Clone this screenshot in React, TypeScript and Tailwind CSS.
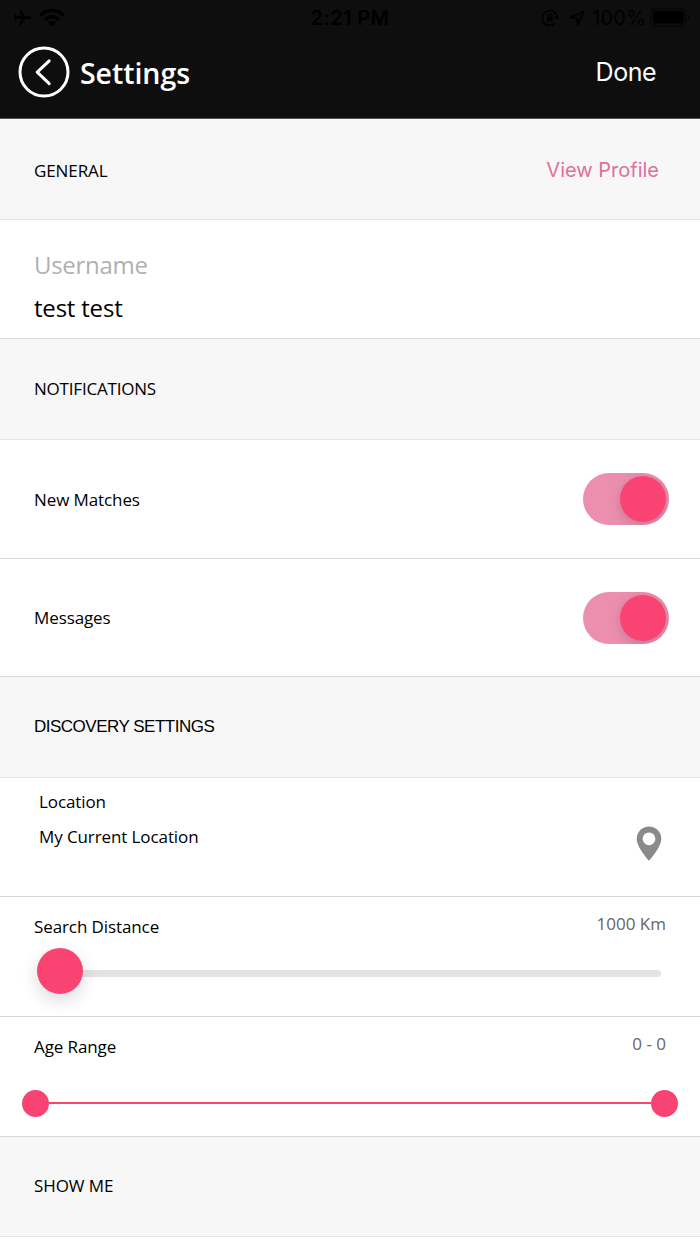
import { useState } from "react";
import { IoMdAirplane } from "react-icons/io";

const openSans = "font-['Open_Sans',sans-serif]";

function StatusBar() {
  return (
    <div className="flex h-[35px] items-center justify-between text-black">
      <div className="flex w-[200px] items-center gap-[6px] pl-[12px]">
        <IoMdAirplane className="size-[21px] rotate-90" />
        <svg viewBox="0 0 26 19" className="h-[19px] w-[26px]" fill="none" stroke="currentColor" strokeWidth="3.6">
          <path d="M1.5 7.2a16.5 16.5 0 0 1 23 0" />
          <path d="M5.8 11.8a10.4 10.4 0 0 1 14.4 0" />
          <path d="M13 18.6l-4-4.2a5.8 5.8 0 0 1 8 0z" fill="currentColor" stroke="none" />
        </svg>
      </div>
      <span className="pt-px font-['Inter',sans-serif] text-[20px] font-semibold leading-[35px] tracking-[0.4px]">2:21 PM</span>
      <div className="flex w-[200px] items-center justify-end pr-[9px]">
        <svg viewBox="0 0 18 18" className="h-[18px] w-[18px]" fill="none" stroke="currentColor" strokeWidth="1.6">
          <path d="M16.2 8A7.4 7.4 0 1 0 14.5 14" />
          <path d="M13.6 7.6h4.4l-2.2 3.4z" fill="currentColor" stroke="none" />
          <path d="M7 8.4V7a1.9 1.9 0 0 1 3.8 0v1.4" strokeWidth="1.2" />
          <rect x="6" y="8" width="5.8" height="4.6" rx="0.6" fill="currentColor" stroke="none" />
        </svg>
        <svg viewBox="0 0 16 16" className="ml-[10px] h-4 w-4" fill="none" stroke="currentColor" strokeWidth="1.8" strokeLinejoin="round">
          <path d="M14.8 1.2L1.2 7.6l6.8.4.6 6.8z" />
        </svg>
        <span className="ml-[7px] pt-px font-['Inter',sans-serif] text-[20px] leading-[35px] tracking-[0.2px]">100%</span>
        <svg viewBox="0 0 41 19" className="ml-[4px] h-[19px] w-[41px] shrink-0">
          <rect x="0.8" y="0.8" width="35" height="17" rx="4.5" fill="none" stroke="#070707" strokeWidth="1.4" />
          <rect x="3" y="3" width="31" height="12.5" rx="2" fill="#000" />
          <path d="M38 6.5c2.4.8 2.4 4.8 0 5.6z" fill="#070707" />
        </svg>
      </div>
    </div>
  );
}

function SectionHeader({ title, className, children }: { title: string; className: string; children?: React.ReactNode }) {
  return (
    <div className={`flex items-center justify-between border-b border-[#e3e3e3] bg-[#f7f7f7] pl-[34px] pr-[41px] text-[17px] leading-6 ${className}`}>
      <h2>{title}</h2>
      {children}
    </div>
  );
}

function Toggle({ checked, onChange }: { checked: boolean; onChange: () => void }) {
  return (
    <button
      type="button"
      role="switch"
      aria-checked={checked}
      onClick={onChange}
      className={`flex h-[52px] w-[86px] items-center overflow-hidden rounded-full bg-[#ec8fae] px-[3px] ${checked ? "justify-end" : "justify-start"}`}
    >
      <span className="size-[46px] rounded-full bg-[#f94473] shadow-[0_3px_12px_rgba(0,0,0,0.17)]" />
    </button>
  );
}

export default function App() {
  const [matches, setMatches] = useState(true);
  const [messages, setMessages] = useState(true);

  return (
    <div className={`flex h-[1244px] w-[700px] flex-col overflow-hidden bg-white text-[17px] tracking-[-0.1px] text-black ${openSans}`}>
      <header className="h-[119px] border-b border-[#555] bg-[#0e0e0e] text-white">
        <StatusBar />
        <div className="flex h-[74px] items-center pl-[18px] pr-[44px]">
          <button type="button" aria-label="Back">
            <svg viewBox="0 0 52 52" className="size-[52px]" fill="none" stroke="currentColor" strokeWidth="3">
              <circle cx="26" cy="26" r="24" />
              <path d="M31.2 14.8L19.2 26.2l12 11.4" strokeLinecap="round" strokeLinejoin="round" />
            </svg>
          </button>
          <h1 className="ml-[10px] mt-px text-[28.5px] font-semibold leading-10 tracking-[-0.05px]">Settings</h1>
          <button type="button" className="ml-auto font-['Inter',sans-serif] text-[25px] leading-8 tracking-[-0.5px]">Done</button>
        </div>
      </header>

      <SectionHeader title="GENERAL" className="h-[101px] pt-[3px]">
        <a className="mb-[2px] font-['Inter',sans-serif] text-[20px] tracking-[0px] text-[#e0709a]">View Profile</a>
      </SectionHeader>
      <div className="h-[119px] border-b border-[#d9d9d9] px-[34px] pt-[25px] text-[24px]">
        <div className="leading-10 tracking-[-0.3px] text-[#b0b0b0]">Username</div>
        <div className="mt-[3px] leading-10 tracking-[-0.2px]">test test</div>
      </div>

      <SectionHeader title="NOTIFICATIONS" className="h-[101px] pb-px tracking-[-0.2px]" />
      <div className="flex h-[119px] items-center justify-between border-b border-[#d9d9d9] pl-[34px] pr-[31px]">
        <span className="pt-px">New Matches</span>
        <Toggle checked={matches} onChange={() => setMatches(!matches)} />
      </div>
      <div className="flex h-[118px] items-center justify-between border-b border-[#d9d9d9] pl-[34px] pr-[31px]">
        <span>Messages</span>
        <Toggle checked={messages} onChange={() => setMessages(!messages)} />
      </div>

      <SectionHeader title="DISCOVERY SETTINGS" className="h-[101px] font-['Liberation_Sans',sans-serif] tracking-[-0.5px]" />
      <div className="flex h-[119px] justify-between border-b border-[#d9d9d9] pl-[39px] pr-[38px]">
        <div className="pt-[12px] leading-6">
          <div>Location</div>
          <div className="mt-[11px]">My Current Location</div>
        </div>
        <svg viewBox="0 0 26 36" className="mt-[48px] h-[36px] w-[26px]" fill="#8a8a8a">
          <path fillRule="evenodd" d="M13 .5A12.3 12.3 0 0 0 .7 12.8C.7 21.5 13 34.8 13 34.8s12.3-13.3 12.3-22A12.3 12.3 0 0 0 13 .5zm0 18.7a6.4 6.4 0 1 1 0-12.8 6.4 6.4 0 0 1 0 12.8z" />
        </svg>
      </div>

      <div className="h-[120px] border-b border-[#d9d9d9] pt-[15px]">
        <div className="flex justify-between px-[34px] leading-6">
          <span className="mt-[3px]">Search Distance</span>
          <span className="tracking-normal text-[#666]">1000 Km</span>
        </div>
        <div className="ml-[37px] mr-[39px] mt-[9px] flex h-[46px] items-center">
          <span className="z-10 size-[46px] rounded-full bg-[#f94473] shadow-[0_6px_18px_rgba(0,0,0,0.15)]" />
          <span className="-ml-1 mt-[4px] h-[7px] flex-1 rounded-full bg-[#e3e3e3]" />
        </div>
      </div>

      <div className="h-[120px] border-b border-[#d9d9d9] pt-[15px]">
        <div className="flex justify-between px-[34px] leading-6">
          <span className="mt-[3px]">Age Range</span>
          <span className="tracking-normal text-[#666]">0 - 0</span>
        </div>
        <div className="mx-[22px] mt-[31px] flex h-[27px] items-center">
          <span className="size-[27px] rounded-full bg-[#f94473]" />
          <span className="mb-px h-[2px] flex-1 bg-[#f94473]" />
          <span className="size-[27px] rounded-full bg-[#f94473]" />
        </div>
      </div>

      <SectionHeader title="SHOW ME" className="h-[100px] pb-[2px]" />
    </div>
  );
}
